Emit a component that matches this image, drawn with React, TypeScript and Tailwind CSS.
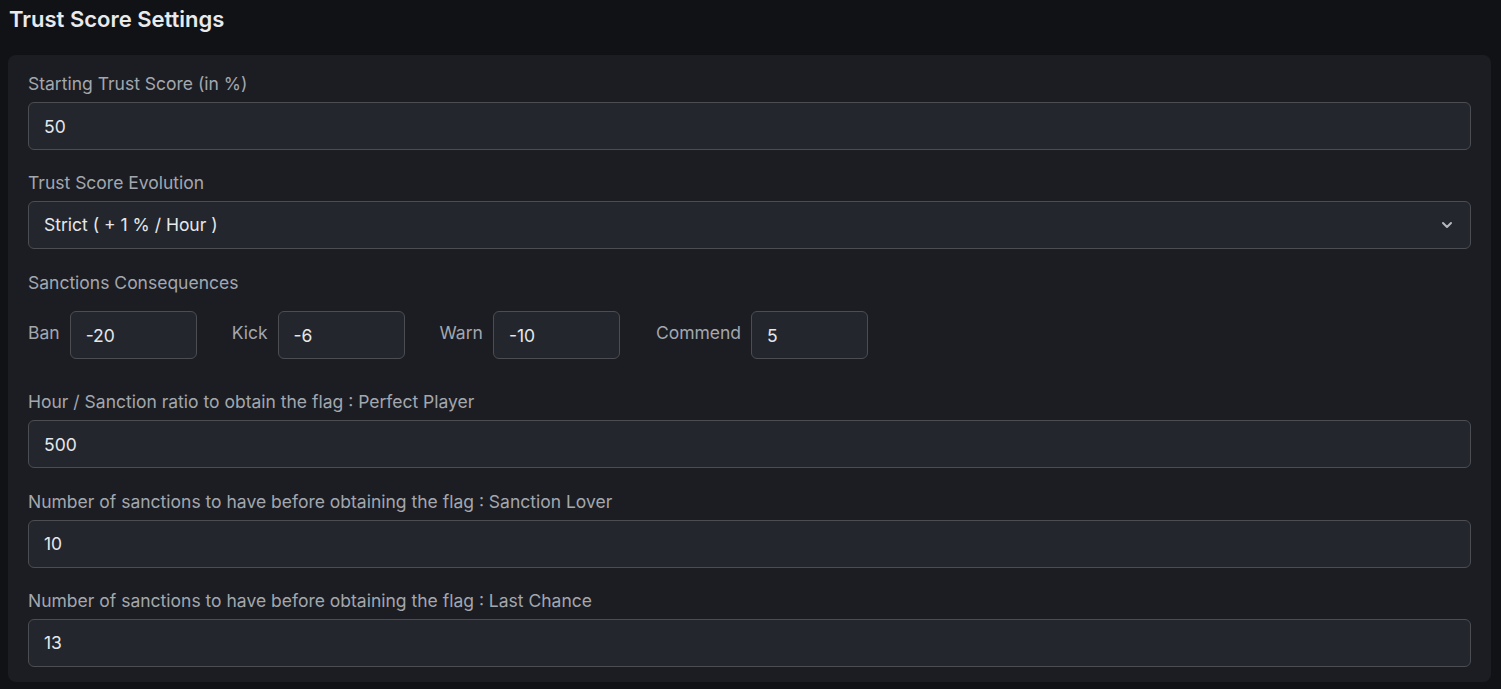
import React from "react";

const inputCls =
  "block w-full h-[48px] rounded-[6px] border border-[#4b4d53] bg-[#23262d] px-[15px] text-[17.5px] text-[#e6e8eb] outline-none";

const labelCls = "h-[24px] leading-[24px] text-[17.5px] text-[#a3a7ae]";

function Field({ label, value, mb }: { label: string; value: string; mb?: string }) {
  return (
    <div className={mb ?? ""}>
      <div className={labelCls + " mb-[6px]"}>{label}</div>
      <input className={inputCls} defaultValue={value} />
    </div>
  );
}

function Small({ label, value, w, gapAfter }: { label: string; value: string; w: string; gapAfter?: string }) {
  return (
    <div className={"flex items-center " + (gapAfter ?? "")}>
      <span className="mb-[5px] mr-[10px] text-[17.5px] leading-[24px] text-[#a3a7ae]">{label}</span>
      <input
        className={"h-[48px] rounded-[6px] border border-[#4b4d53] bg-[#23262d] px-[15px] text-[17.5px] text-[#e6e8eb] outline-none " + w}
        defaultValue={value}
      />
    </div>
  );
}

export default function App() {
  return (
    <div
      className="min-h-[689px] w-full bg-[#111216] pb-[7px]"
      style={{ fontFamily: "Inter, 'Noto Sans', sans-serif" }}
    >
      <div className="h-[55px] pl-[9px] pt-[5px] text-[22px] leading-[28px] font-semibold text-[#e8eaed]">
        Trust Score Settings
      </div>
      <div className="mx-[8px] w-[1483px] rounded-[8px] bg-[#1b1d23] px-[20px] pt-[17px] pb-[15px]">
        <Field label="Starting Trust Score (in %)" value="50" mb="mb-[21px]" />
        <div className="mb-[21.5px]">
          <div className={labelCls + " mb-[6px]"}>Trust Score Evolution</div>
          <div className="relative">
            <div className={inputCls + " flex items-center"}>Strict ( + 1 % / Hour )</div>
            <svg
              className="absolute right-[18px] top-[19px]"
              width="12"
              height="10"
              viewBox="0 0 12 10"
              fill="none"
            >
              <path d="M2 3l4 4 4-4" stroke="#b4b8c0" strokeWidth="2" strokeLinecap="round" strokeLinejoin="round" />
            </svg>
          </div>
        </div>
        <div className="mb-[31px]">
          <div className={labelCls + " mb-[16.5px]"}>Sanctions Consequences</div>
          <div className="flex items-center">
            <Small label="Ban" value="-20" w="w-[127px]" gapAfter="mr-[35px]" />
            <Small label="Kick" value="-6" w="w-[127px]" gapAfter="mr-[35px]" />
            <Small label="Warn" value="-10" w="w-[127px]" gapAfter="mr-[36px]" />
            <Small label="Commend" value="5" w="w-[117px]" />
          </div>
        </div>
        <Field label="Hour / Sanction ratio to obtain the flag : Perfect Player" value="500" mb="mb-[21.5px]" />
        <Field label="Number of sanctions to have before obtaining the flag : Sanction Lover" value="10" mb="mb-[21px]" />
        <Field label="Number of sanctions to have before obtaining the flag : Last Chance" value="13" />
      </div>
    </div>
  );
}
